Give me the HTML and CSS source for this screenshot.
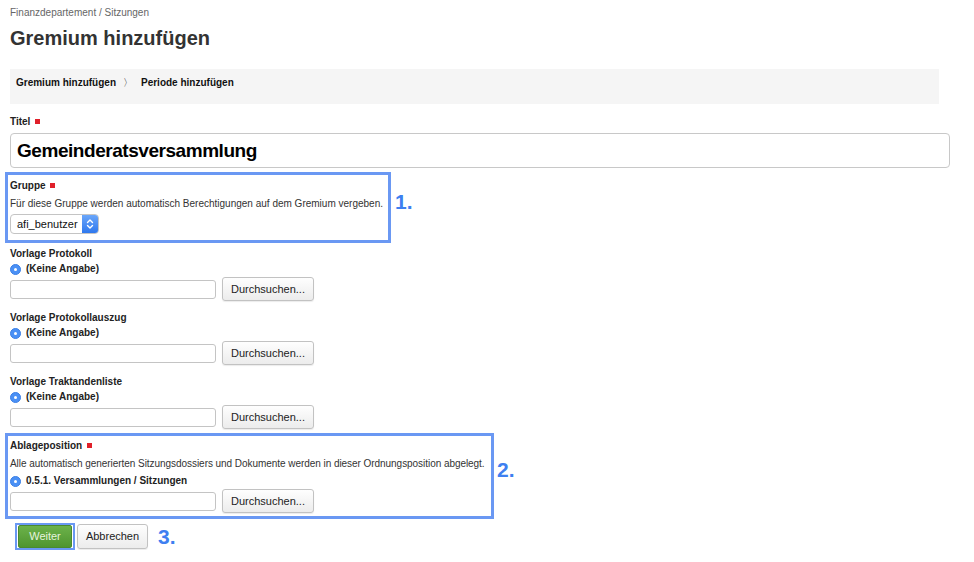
FILE: index.html
```html
<!DOCTYPE html>
<html lang="de">
<head>
<meta charset="utf-8">
<title>Gremium hinzufügen</title>
<link rel="stylesheet" href="styles.css">
</head>
<body>
<div class="page">
  <div class="crumbs">Finanzdepartement / Sitzungen</div>
  <h1 class="title">Gremium hinzufügen</h1>
  <div class="wizard">
    <span class="step">Gremium hinzufügen</span>
    <span class="sep">〉</span>
    <span class="step">Periode hinzufügen</span>
  </div>

  <div class="field-title">
    <div class="label">Titel <span class="req"></span></div>
    <div class="title-input">Gemeinderatsversammlung</div>
  </div>

  <div class="hl hl-1">
    <div class="label">Gruppe <span class="req"></span></div>
    <div class="desc">Für diese Gruppe werden automatisch Berechtigungen auf dem Gremium vergeben.</div>
    <div class="select">
      <span class="select-text">afi_benutzer</span>
      <span class="select-arrow">
        <svg width="8" height="12" viewBox="0 0 8 12"><path d="M1.5 4.5 L4 2 L6.5 4.5 M1.5 7.5 L4 10 L6.5 7.5" fill="none" stroke="#fff" stroke-width="1.4" stroke-linecap="round" stroke-linejoin="round"/></svg>
      </span>
    </div>
    <span class="mark">1.</span>
  </div>

  <div class="field">
    <div class="label">Vorlage Protokoll</div>
    <div class="radio-line"><span class="radio"></span>(Keine Angabe)</div>
    <div class="row"><span class="input"></span><span class="btn">Durchsuchen...</span></div>
  </div>

  <div class="field">
    <div class="label">Vorlage Protokollauszug</div>
    <div class="radio-line"><span class="radio"></span>(Keine Angabe)</div>
    <div class="row"><span class="input"></span><span class="btn">Durchsuchen...</span></div>
  </div>

  <div class="field last">
    <div class="label">Vorlage Traktandenliste</div>
    <div class="radio-line"><span class="radio"></span>(Keine Angabe)</div>
    <div class="row"><span class="input"></span><span class="btn">Durchsuchen...</span></div>
  </div>

  <div class="hl hl-2">
    <div class="label">Ablageposition <span class="req"></span></div>
    <div class="desc">Alle automatisch generierten Sitzungsdossiers und Dokumente werden in dieser Ordnungsposition abgelegt.</div>
    <div class="radio-line"><span class="radio"></span>0.5.1. Versammlungen / Sitzungen</div>
    <div class="row"><span class="input"></span><span class="btn">Durchsuchen...</span></div>
    <span class="mark">2.</span>
  </div>

  <div class="actions">
    <span class="hl-btn"><span class="btn-ok">Weiter</span></span>
    <span class="btn btn-cancel">Abbrechen</span>
    <span class="mark3">3.</span>
  </div>
</div>
</body>
</html>
```
FILE: styles.css
```css
html, body {
  margin: 0;
  padding: 0;
  background: #fff;
}
body {
  font-family: "Liberation Sans", Arial, Helvetica, sans-serif;
  color: #222;
}
.page {
  padding: 6px 24px 0 10px;
  width: 940px;
}
.crumbs {
  font-size: 10px;
  line-height: 14px;
  color: #666;
}
.title {
  margin: 6px 0 0 0;
  font-size: 20px;
  line-height: 24px;
  font-weight: bold;
  color: #333;
}
.wizard {
  margin-top: 19px;
  background: #f5f5f5;
  width: 929px;
  height: 35px;
  box-sizing: border-box;
  padding: 7px 0 0 6px;
  font-size: 10px;
  line-height: 14px;
  font-weight: bold;
  color: #111;
  display: flex;
}
.wizard .sep {
  font-weight: normal;
  margin: 0 8px 0 7px;
}
.field-title {
  margin-top: 11px;
}
.label {
  font-size: 10px;
  line-height: 14px;
  font-weight: bold;
  color: #222;
}
.req {
  display: inline-block;
  width: 5px;
  height: 5px;
  background: #e0202a;
  margin-left: 2px;
  vertical-align: 1px;
}
.title-input {
  margin-top: 4px;
  width: 940px;
  height: 35px;
  box-sizing: border-box;
  border: 1px solid #c8c8c8;
  border-radius: 4px;
  padding: 0 0 0 6px;
  font-size: 19px;
  letter-spacing: -0.45px;
  line-height: 33px;
  font-weight: bold;
  color: #000;
}
.hl {
  position: relative;
  border: 3px solid #6a98f3;
  margin-left: -5px;
  padding-left: 2px;
  box-sizing: border-box;
}
.hl-1 {
  margin-top: 4px;
  width: 386px;
  padding-top: 4px;
  padding-bottom: 6px;
}
.hl-2 {
  margin-top: 4px;
  width: 489px;
  padding-top: 3px;
  padding-bottom: 3px;
}
.desc {
  margin-top: 4px;
  font-size: 10px;
  line-height: 14px;
  color: #333;
  white-space: nowrap;
}
.hl-2 .desc {
  letter-spacing: -0.05px;
}
.hl-2 .radio-line {
  margin-top: 3px;
}
.select {
  margin-top: 3px;
  width: 89px;
  height: 20px;
  box-sizing: border-box;
  border: 1px solid #c4c4c4;
  border-radius: 4px;
  display: flex;
  overflow: hidden;
  background: #fff;
}
.select-text {
  flex: 1;
  font-size: 11px;
  line-height: 18px;
  padding-left: 6px;
  color: #111;
}
.select-arrow {
  width: 16px;
  background: linear-gradient(#6aa6fa, #2f78ee);
  display: flex;
  align-items: center;
  justify-content: center;
}
.mark {
  position: absolute;
  left: 100%;
  top: 15px;
  margin-left: 7px;
  font-size: 21px;
  line-height: 24px;
  font-weight: bold;
  color: #3e7ff0;
}
.hl-2 .mark {
  top: 22px;
  margin-left: 6px;
}
.field {
  margin-top: 4px;
  margin-bottom: 10px;
}
.field.last {
  margin-bottom: 0;
}
.field + .field {
  margin-top: 0;
}
.radio-line {
  margin-top: 1px;
  font-size: 10px;
  line-height: 14px;
  font-weight: bold;
  color: #222;
  display: flex;
  align-items: center;
}
.radio {
  width: 11px;
  height: 11px;
  border-radius: 50%;
  background: #4a90f5;
  margin: 0 5px 0 0;
  position: relative;
  box-sizing: border-box;
  border: 1px solid #3a7fe6;
}
.radio::after {
  content: "";
  position: absolute;
  left: 3px;
  top: 3px;
  width: 3px;
  height: 3px;
  border-radius: 50%;
  background: #fff;
}
.row {
  margin-top: 1px;
  display: flex;
  align-items: center;
  gap: 6px;
  height: 24px;
}
.input {
  width: 206px;
  height: 19px;
  box-sizing: border-box;
  border: 1px solid #c4c4c4;
  border-radius: 3px;
  background: #fff;
}
.btn {
  height: 24px;
  box-sizing: border-box;
  padding: 0 10px;
  border: 1px solid #c2c2c2;
  border-radius: 3px;
  background: linear-gradient(#fefefe, #ececec);
  box-shadow: 0 1px 1px rgba(0,0,0,0.08);
  font-size: 11px;
  line-height: 22px;
  color: #222;
  white-space: nowrap;
}
.row .btn {
  width: 92px;
  padding: 0;
  text-align: center;
}
.actions {
  margin-top: 4px;
  display: flex;
  align-items: center;
  padding-left: 5px;
  height: 27px;
}
.hl-btn {
  border: 2px solid #6a98f3;
  padding: 0 1px;
  height: 27px;
  box-sizing: border-box;
  display: flex;
  align-items: center;
}
.btn-ok {
  display: block;
  width: 54px;
  height: 23px;
  box-sizing: border-box;
  border: 1px solid #4a8a30;
  border-radius: 2px;
  background: linear-gradient(#6cb24a, #4f9530);
  font-size: 11px;
  line-height: 21px;
  text-align: center;
  color: #e6f4de;
}
.btn-cancel {
  margin-left: 2px;
  width: 71px;
  height: 25px;
  padding: 0;
  text-align: center;
  line-height: 23px;
}
.mark3 {
  margin-left: 10px;
  font-size: 21px;
  line-height: 24px;
  font-weight: bold;
  color: #3e7ff0;
}
```
